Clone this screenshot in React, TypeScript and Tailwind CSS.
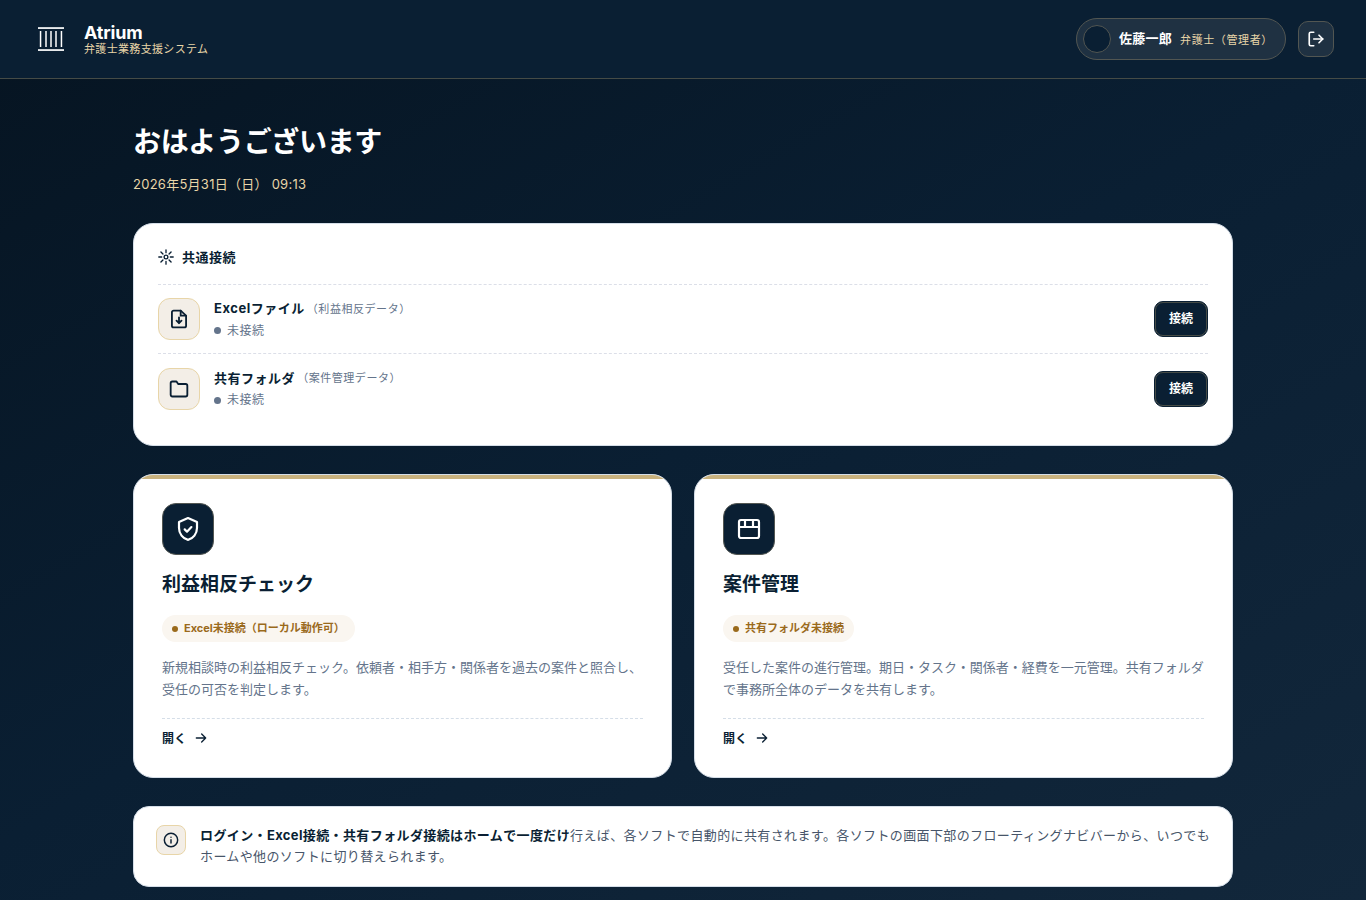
import type { ReactNode } from 'react';

type IconProps = {
  children: ReactNode;
  className?: string;
  strokeWidth?: number;
};

function Icon({ children, className, strokeWidth = 2.2 }: IconProps) {
  return (
    <svg
      viewBox="0 0 24 24"
      fill="none"
      stroke="currentColor"
      strokeWidth={strokeWidth}
      strokeLinecap="round"
      strokeLinejoin="round"
      className={className}
    >
      {children}
    </svg>
  );
}

function Logo() {
  return (
    <svg viewBox="0 0 38 38" className="size-[38px]" fill="#fff">
      <rect x="6" y="7.2" width="26" height="1.7" />
      <rect x="6" y="29.2" width="26" height="1.7" />
      <rect x="7.8" y="11" width="1.5" height="16" />
      <rect x="13" y="11" width="2" height="16" opacity="0.75" />
      <rect x="18" y="11" width="2" height="16" opacity="0.75" />
      <rect x="23" y="11" width="2" height="16" opacity="0.75" />
      <rect x="28.7" y="11" width="1.5" height="16" />
    </svg>
  );
}

function Header() {
  return (
    <header className="flex h-[79px] items-center justify-between border-b border-[#454b46] bg-[#0a1f33] px-8">
      <div className="flex items-center gap-3.5">
        <Logo />
        <div>
          <div className="text-[18px] leading-[20px] font-bold tracking-[-0.01em] text-white">Atrium</div>
          <div className="text-[11px] leading-[13px] tracking-[0.03em] text-[#e8d5a8]">弁護士業務支援システム</div>
        </div>
      </div>
      <div className="flex items-center gap-3">
        <div className="flex h-[42px] w-[210px] items-center rounded-full border border-[#525652] bg-[#1f3142] pl-1.5">
          <span className="mr-2 size-7 rounded-full border border-[#525652] bg-[#0a1f33]" />
          <span className="mr-2 text-[13px] font-bold tracking-[0.02em] whitespace-nowrap text-white">佐藤一郎</span>
          <span className="pt-0.5 text-[11px] tracking-[0.055em] whitespace-nowrap text-[#e8d5a8]">弁護士（管理者）</span>
        </div>
        <button type="button" className="flex size-9 items-center justify-center rounded-[10px] border border-[#525652] bg-[#1f3142] text-white">
          <Icon className="size-[18px]">
            <path d="M9 21H5a2 2 0 0 1-2-2V5a2 2 0 0 1 2-2h4" />
            <path d="M16 17l5-5-5-5" />
            <path d="M21 12H9" />
          </Icon>
        </button>
      </div>
    </header>
  );
}

type ConnectionProps = {
  icon: ReactNode;
  name: string;
  note: string;
  className: string;
};

function Connection({ icon, name, note, className }: ConnectionProps) {
  return (
    <div className={`flex items-center border-t border-dashed border-[#dcdfe8] ${className}`}>
      <div className="flex size-[42px] items-center justify-center rounded-xl border border-[#e8d5a8] bg-[#f3eee7] text-[#0a1f33]">
        {icon}
      </div>
      <div className="ml-3.5 flex-1">
        <div className="flex items-center gap-0.5 leading-[21px]">
          <span className="text-[13px] font-bold tracking-[0.04em] text-[#0a1f33]">{name}</span>
          <span className="pt-px text-[11px] tracking-[0.05em] text-[#64748b]">{note}</span>
        </div>
        <div className="flex items-center gap-1.5 pt-px text-[12px] leading-[20px] tracking-[0.04em] text-[#64748b]">
          <span className="size-[7px] rounded-full bg-[#64748b]" />
          未接続
        </div>
      </div>
      <button type="button" className="h-9 w-[54px] rounded-[9px] border border-[#0a1f33] bg-[#0a1f33] p-0 text-[12px] font-bold text-white">
        <span className="flex h-full items-center justify-center rounded-lg border border-[#454b46]">接続</span>
      </button>
    </div>
  );
}

type SoftwareProps = {
  icon: ReactNode;
  title: string;
  status: string;
  description: string;
};

function SoftwareCard({ icon, title, status, description }: SoftwareProps) {
  return (
    <a className="block h-[304px] overflow-hidden rounded-[20px] border border-[#d5dee8] bg-white">
      <div className="h-1 bg-[#c9b27e]" />
      <div className="px-7 pt-6">
        <div className="flex size-[52px] items-center justify-center rounded-[14px] border border-[#525652] bg-[#0a1f33] text-white">
          {icon}
        </div>
        <h2 className="mt-[17px] text-[19px] leading-[26px] font-bold text-[#0a1f33]">{title}</h2>
        <div className="mt-[17px] flex h-[27px] w-fit items-center gap-1.5 rounded-full bg-[#faf6f0] px-2.5 text-[11px] font-bold text-[#9a6a1c]">
          <span className="size-1.5 rounded-full bg-[#9a6a1c]" />
          {status}
        </div>
        <p className="mt-3.5 text-[13px] leading-[22px] text-[#64748b]">{description}</p>
        <div className="mt-[18px] flex items-center gap-[7px] border-t border-dashed border-[#d5dee8] pt-2.5 text-[12px] leading-[19px] font-bold tracking-[0.02em] text-[#0a1f33]">
          開く
          <Icon className="-mt-px size-4" strokeWidth={2}>
            <path d="M5 12h14M13 6l6 6-6 6" />
          </Icon>
        </div>
      </div>
    </a>
  );
}

export default function App() {
  return (
    <div
      lang="ja"
      className="h-[900px] overflow-hidden bg-linear-150 from-[#061421] via-[#0a1f33] to-[#12273b] font-['Inter','Noto_Sans_CJK_JP',sans-serif]"
    >
      <Header />
      <main className="mx-auto w-[1100px] pt-[42px]">
        <h1 className="text-[28px] leading-[42px] font-bold tracking-[-0.012em] text-white">おはようございます</h1>
        <p className="mt-[11px] text-[13px] leading-[20px] tracking-[0.02em] text-[#e8d5a8]">2026年5月31日（日） 09:13</p>

        <section className="mt-[29px] h-[223px] rounded-[20px] border border-[#d5dee8] bg-white px-6 pt-[22px]">
          <h2 className="mb-4 flex items-center gap-2 text-[13px] leading-[22px] font-bold tracking-[0.04em] text-[#0a1f33]">
            <Icon className="size-4" strokeWidth={2}>
              <circle cx="12" cy="12" r="2.8" />
              <path d="M12 1.2v4.3M12 18.5v4.3M4.4 4.4l3 3M16.6 16.6l3 3M1.2 12h4.3M18.5 12h4.3M4.4 19.6l3-3M16.6 7.4l3-3" />
            </Icon>
            共通接続
          </h2>
          <Connection
            className="h-[69px]"
            name="Excelファイル"
            note="（利益相反データ）"
            icon={
              <Icon className="size-5">
                <path d="M14 2H5.5A2 2 0 0 0 3.5 4v16a2 2 0 0 0 2 2h13a2 2 0 0 0 2-2V8z" />
                <path d="M14 2v6h6M12 10v7M9 14l3 3 3-3" />
              </Icon>
            }
          />
          <Connection
            className="h-[70px]"
            name="共有フォルダ"
            note="（案件管理データ）"
            icon={
              <Icon className="size-5">
                <path d="M22 19a2 2 0 0 1-2 2H4a2 2 0 0 1-2-2V5a2 2 0 0 1 2-2h5l2 3h9a2 2 0 0 1 2 2z" />
              </Icon>
            }
          />
        </section>

        <div className="mt-7 grid grid-cols-2 gap-[22px]">
          <SoftwareCard
            title="利益相反チェック"
            status="Excel未接続（ローカル動作可）"
            description="新規相談時の利益相反チェック。依頼者・相手方・関係者を過去の案件と照合し、受任の可否を判定します。"
            icon={
              <Icon className="size-6">
                <path d="M12 1.1l9 4v6c0 5.55-3.84 10.74-9 11.8-5.16-1.06-9-6.25-9-11.8v-6z" />
                <path d="M8.7 12.4l2.3 2.3 4.4-4.6" />
              </Icon>
            }
          />
          <SoftwareCard
            title="案件管理"
            status="共有フォルダ未接続"
            description="受任した案件の進行管理。期日・タスク・関係者・経費を一元管理。共有フォルダで事務所全体のデータを共有します。"
            icon={
              <Icon className="size-6">
                <rect x="2" y="3" width="20" height="18" rx="2" />
                <path d="M2 10h20M8 3v7M16 3v7" />
              </Icon>
            }
          />
        </div>

        <section className="mt-7 flex h-[81px] gap-3.5 rounded-2xl border border-[#d5dee8] bg-white pt-[18px] pr-5 pl-[22px]">
          <div className="flex size-[30px] shrink-0 items-center justify-center rounded-lg border border-[#e8d5a8] bg-[#f3eee7] text-[#0a1f33]">
            <Icon className="size-4">
              <circle cx="12" cy="12" r="10" />
              <path d="M12 16.5v-5M12 7.8h.01" />
            </Icon>
          </div>
          <p className="text-[13px] leading-[21px] tracking-[0.029em] text-[#475569]">
            <strong className="font-bold text-[#0a1f33]">ログイン・Excel接続・共有フォルダ接続はホームで一度だけ</strong>
            行えば、各ソフトで自動的に共有されます。各ソフトの画面下部のフローティングナビバーから、いつでもホームや他のソフトに切り替えられます。
          </p>
        </section>
      </main>
    </div>
  );
}
